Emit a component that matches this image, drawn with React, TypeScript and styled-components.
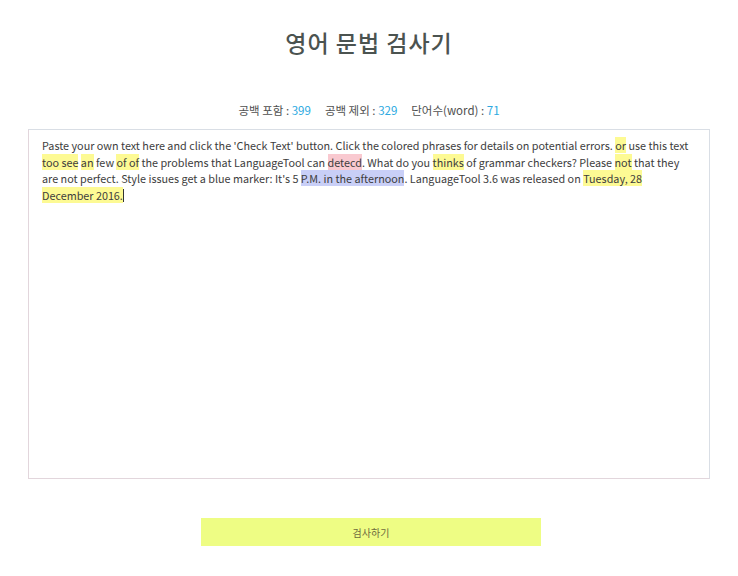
import React from "react";
import styled, { createGlobalStyle } from "styled-components";

const Global = createGlobalStyle`
  html, body { margin: 0; padding: 0; background: #ffffff; }
  body { font-family: "Noto Sans CJK KR", "Noto Sans", sans-serif; color: #444; }
`;

const Page = styled.main`
  display: flex;
  flex-direction: column;
  align-items: center;
  width: 738px;
  padding-top: 26px;
`;

const Title = styled.h1`
  margin: 0;
  font-size: 23px;
  line-height: 32px;
  font-weight: 500;
  color: #4b5350;
  letter-spacing: 1px;
`;

const Stats = styled.div`
  display: flex;
  gap: 14px;
  margin-top: 44px;
  font-size: 11.5px;
  line-height: 16px;
  color: #4f4f4f;
`;

const Stat = styled.span``;

const Num = styled.span`
  color: #2ba9e1;
`;

const Editor = styled.div`
  box-sizing: border-box;
  width: 682px;
  height: 350px;
  margin-top: 11px;
  padding: 7px 18px 7px 13px;
  border: 1px solid #d9dee5;
  border-left-color: #e2d6dc;
  border-bottom-color: #e2d6dc;
  font-size: 10.8px;
  line-height: 16.5px;
  color: #3d3d3d;
`;

const Mark = styled.span<{ $tone: "y" | "r" | "b" }>`
  background: ${(p) =>
    p.$tone === "y" ? "#fdfa94" : p.$tone === "r" ? "#f9c9d0" : "#c9cff7"};
`;

const Caret = styled.span`
  display: inline-block;
  width: 1px;
  height: 13px;
  background: #333;
  vertical-align: -2px;
`;

const Button = styled.button`
  width: 340px;
  height: 28px;
  margin-top: 39px;
  margin-left: 4px;
  border: none;
  background: #eefd84;
  font-family: "Noto Sans CJK KR", sans-serif;
  font-size: 10px;
  color: #6f6a3e;
  cursor: pointer;
`;

export default function App() {
  return (
    <>
      <Global />
      <Page>
        <Title>영어 문법 검사기</Title>
        <Stats>
          <Stat>
            공백 포함 : <Num>399</Num>
          </Stat>
          <Stat>
            공백 제외 : <Num>329</Num>
          </Stat>
          <Stat>
            단어수(word) : <Num>71</Num>
          </Stat>
        </Stats>
        <Editor>
          Paste your own text here and click the 'Check Text' button. Click the colored phrases for
          details on potential errors. <Mark $tone="y">or</Mark> use this text{" "}
          <Mark $tone="y">too see</Mark> <Mark $tone="y">an</Mark> few <Mark $tone="y">of of</Mark>{" "}
          the problems that LanguageTool can <Mark $tone="r">detecd</Mark>. What do you{" "}
          <Mark $tone="y">thinks</Mark> of grammar checkers? Please <Mark $tone="y">not</Mark> that
          they are not perfect. Style issues get a blue marker: It's 5{" "}
          <Mark $tone="b">P.M. in the afternoon</Mark>. LanguageTool 3.6 was released on{" "}
          <Mark $tone="y">Tuesday, 28 December 2016.</Mark>
          <Caret />
        </Editor>
        <Button>검사하기</Button>
      </Page>
    </>
  );
}
